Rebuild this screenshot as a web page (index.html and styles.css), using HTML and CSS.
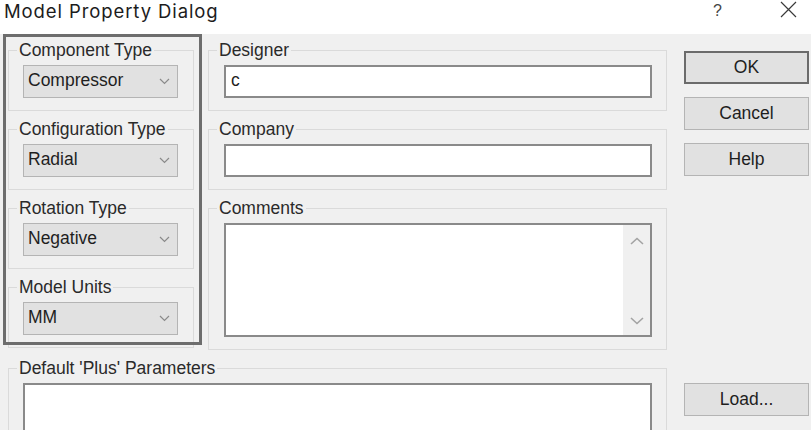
FILE: index.html
```html
<!DOCTYPE html>
<html>
<head>
<meta charset="utf-8">
<title>Model Property Dialog</title>
<link rel="stylesheet" href="styles.css">
</head>
<body>
<div class="dialog">
  <div class="titlebar">
    <span class="title">Model Property Dialog</span>
    <span class="help-q">?</span>
    <span class="close"><svg width="17" height="17" viewBox="0 0 17 17"><path d="M1 1 L16 16 M16 1 L1 16" stroke="#3a3a3a" stroke-width="1.2" fill="none"/></svg></span>
  </div>
  <div class="content">
    <div class="top">
      <div class="col-left">
        <fieldset class="group">
          <legend>Component Type</legend>
          <div class="combo"><span>Compressor</span><svg class="chev" width="11" height="7" viewBox="0 0 11 7"><path d="M1 1 L5.5 5.5 L10 1" stroke="#8a8a8a" stroke-width="1.2" fill="none"/></svg></div>
        </fieldset>
        <fieldset class="group">
          <legend>Configuration Type</legend>
          <div class="combo"><span>Radial</span><svg class="chev" width="11" height="7" viewBox="0 0 11 7"><path d="M1 1 L5.5 5.5 L10 1" stroke="#8a8a8a" stroke-width="1.2" fill="none"/></svg></div>
        </fieldset>
        <fieldset class="group">
          <legend>Rotation Type</legend>
          <div class="combo"><span>Negative</span><svg class="chev" width="11" height="7" viewBox="0 0 11 7"><path d="M1 1 L5.5 5.5 L10 1" stroke="#8a8a8a" stroke-width="1.2" fill="none"/></svg></div>
        </fieldset>
        <fieldset class="group">
          <legend>Model Units</legend>
          <div class="combo"><span>MM</span><svg class="chev" width="11" height="7" viewBox="0 0 11 7"><path d="M1 1 L5.5 5.5 L10 1" stroke="#8a8a8a" stroke-width="1.2" fill="none"/></svg></div>
        </fieldset>
      </div>
      <div class="col-mid">
        <fieldset class="group">
          <legend>Designer</legend>
          <div class="textbox">c</div>
        </fieldset>
        <fieldset class="group">
          <legend>Company</legend>
          <div class="textbox"></div>
        </fieldset>
        <fieldset class="group">
          <legend>Comments</legend>
          <div class="textarea comments">
            <div class="scrollbar">
              <svg width="14" height="8" viewBox="0 0 14 8"><path d="M1 7 L7 1.5 L13 7" stroke="#a3a3a3" stroke-width="1.6" fill="none"/></svg>
              <svg width="14" height="8" viewBox="0 0 14 8"><path d="M1 1 L7 6.5 L13 1" stroke="#a3a3a3" stroke-width="1.6" fill="none"/></svg>
            </div>
          </div>
        </fieldset>
      </div>
      <div class="col-btn">
        <div class="btn default">OK</div>
        <div class="btn">Cancel</div>
        <div class="btn">Help</div>
      </div>
    </div>
    <div class="bottom">
      <fieldset class="group wide">
        <legend>Default 'Plus' Parameters</legend>
        <div class="textarea plus"></div>
      </fieldset>
      <div class="col-btn load-col">
        <div class="btn">Load...</div>
      </div>
    </div>
  </div>
  <div class="highlight"></div>
</div>
</body>
</html>
```

FILE: styles.css
```css
* { box-sizing: border-box; }

html, body {
  margin: 0;
  padding: 0;
}

body {
  background: #f0f0f0;
  font-family: "Liberation Sans", Arial, sans-serif;
  font-size: 17.5px;
  color: #262626;
  width: 811px;
  height: 430px;
  overflow: hidden;
}

.dialog {
  position: relative;
  width: 811px;
  height: 430px;
  overflow: hidden;
}

.titlebar {
  height: 34px;
  background: #ffffff;
  display: flex;
  align-items: flex-start;
}

.title {
  font-family: Inter, "Open Sans", sans-serif;
  font-size: 18.5px;
  letter-spacing: 0.9px;
  line-height: 23px;
  margin-left: 4px;
  color: #1c1c1c;
}

.help-q {
  margin-left: auto;
  margin-top: 1px;
  width: 10px;
  font-family: "Liberation Sans", sans-serif;
  font-size: 16px;
  line-height: 20px;
  color: #444;
}

.close {
  margin: 1px 14px 0 57px;
  width: 17px;
  height: 17px;
  display: flex;
}

.content {
  padding: 6px 0 0 8px;
}

.top {
  display: flex;
}

.col-left {
  width: 186px;
  display: flex;
  flex-direction: column;
  gap: 8px;
}

.col-mid {
  width: 459px;
  margin-left: 14px;
  display: flex;
  flex-direction: column;
  gap: 8px;
}

.col-btn {
  width: 125px;
  margin-left: 17px;
  padding-top: 11px;
  display: flex;
  flex-direction: column;
  gap: 13px;
}

fieldset.group {
  margin: 0;
  padding: 5px 14px 12px 14px;
  border: 1px solid #dadada;
  min-width: 0;
}

.col-mid fieldset.group {
  padding-left: 15px;
}

legend {
  padding: 0 2px;
  margin-left: -6px;
  line-height: 20px;
  color: #2a2a2a;
}

.col-mid legend {
  margin-left: -7px;
}

.combo {
  width: 155px;
  height: 33px;
  border: 1px solid #b4b4b4;
  background: #e1e1e1;
  display: flex;
  align-items: center;
  justify-content: space-between;
  padding: 0 7px 3px 4px;
  line-height: 20px;
  color: #1e1e1e;
}

.combo .chev {
  margin-top: 3px;
}

.textbox {
  width: 428px;
  height: 33px;
  background: #ffffff;
  border: 2px solid #8a8a8a;
  padding: 0 0 3px 5px;
  line-height: 20px;
  display: flex;
  align-items: center;
  color: #1e1e1e;
}

.textarea {
  background: #ffffff;
  border: 2px solid #8a8a8a;
  display: flex;
  justify-content: flex-end;
}

.comments {
  width: 428px;
  height: 114px;
}

.scrollbar {
  width: 27px;
  background: #f0f0f0;
  display: flex;
  flex-direction: column;
  justify-content: space-between;
  align-items: center;
  padding: 12px 0 10px 0;
}

.btn {
  height: 33px;
  border: 1px solid #b4b4b4;
  background: #e1e1e1;
  display: flex;
  align-items: center;
  justify-content: center;
  line-height: 20px;
  color: #1e1e1e;
  padding-bottom: 2px;
}

.btn.default {
  border: 2px solid #6b6b6b;
}

.bottom {
  display: flex;
  margin-top: 8px;
}

fieldset.wide {
  width: 659px;
}

.plus {
  width: 629px;
  height: 70px;
}

.load-col {
  padding-top: 25px;
}

.highlight {
  position: absolute;
  left: 3px;
  top: 34px;
  width: 199px;
  height: 311px;
  border: 3px solid #6d6d6d;
  pointer-events: none;
}
```
